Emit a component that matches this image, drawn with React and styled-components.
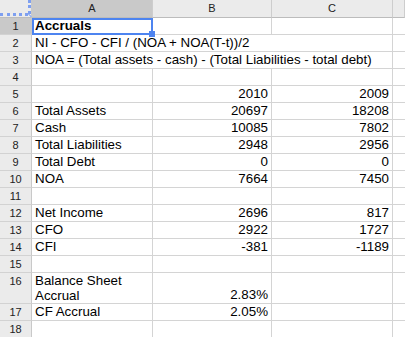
import React from "react";
import styled, { createGlobalStyle } from "styled-components";

const GlobalStyle = createGlobalStyle`
  html, body {
    margin: 0;
    padding: 0;
    background: #ffffff;
  }
  body {
    font-family: "Liberation Sans", Arial, sans-serif;
    color: #000000;
  }
`;

const rows = [
  { n: 1, cells: [{ text: "Accruals", bold: true, selected: true }, {}, {}] },
  { n: 2, cells: [{ text: "NI - CFO - CFI / (NOA + NOA(T-t))/2", span: 3 }] },
  {
    n: 3,
    cells: [
      {
        text: "NOA = (Total assets - cash) - (Total Liabilities - total debt)",
        span: 3,
      },
    ],
  },
  { n: 4, cells: [{}, {}, {}] },
  { n: 5, cells: [{}, { text: "2010", num: true }, { text: "2009", num: true }] },
  { n: 6, cells: [{ text: "Total Assets" }, { text: "20697", num: true }, { text: "18208", num: true }] },
  { n: 7, cells: [{ text: "Cash" }, { text: "10085", num: true }, { text: "7802", num: true }] },
  { n: 8, cells: [{ text: "Total Liabilities" }, { text: "2948", num: true }, { text: "2956", num: true }] },
  { n: 9, cells: [{ text: "Total Debt" }, { text: "0", num: true }, { text: "0", num: true }] },
  { n: 10, cells: [{ text: "NOA" }, { text: "7664", num: true }, { text: "7450", num: true }] },
  { n: 11, cells: [{}, {}, {}] },
  { n: 12, cells: [{ text: "Net Income" }, { text: "2696", num: true }, { text: "817", num: true }] },
  { n: 13, cells: [{ text: "CFO" }, { text: "2922", num: true }, { text: "1727", num: true }] },
  { n: 14, cells: [{ text: "CFI" }, { text: "-381", num: true }, { text: "-1189", num: true }] },
  { n: 15, cells: [{}, {}, {}] },
  { n: 16, cells: [{ text: "Balance Sheet Accrual", wrap: true }, { text: "2.83%", num: true }, {}] },
  { n: 17, cells: [{ text: "CF Accrual" }, { text: "2.05%", num: true }, {}] },
  { n: 18, cells: [{}, {}, {}] },
];

const columns = ["A", "B", "C"];

const Sheet = styled.div`
  display: grid;
  grid-template-columns: 32px 121px 119px 121px 1fr;
  grid-template-rows: 18px repeat(15, 17px) 31px 17px 17px;
  width: 100%;
  height: 337px;
  overflow: hidden;
`;

// frozen-pane handles: dotted blue bars along the corner's right and bottom
const Corner = styled.div`
  position: relative;
  z-index: 3;
  background: #ebebeb;
  border-right: 1px solid #c9c9c9;
  border-bottom: 1px solid #bcbcbc;

  &::before {
    content: "";
    position: absolute;
    top: 0;
    left: 28px;
    height: 14px;
    border-left: 3px dotted #7e9ff0;
  }

  &::after {
    content: "";
    position: absolute;
    top: 13px;
    left: 0;
    width: 28px;
    border-top: 3px dotted #7e9ff0;
  }
`;

const CornerJoin = styled.div`
  position: absolute;
  top: 14px;
  left: 28px;
  width: 4px;
  height: 3px;
  background: linear-gradient(45deg, transparent 35%, #9fb8f3 35%, #9fb8f3 65%, transparent 65%);
`;

const ColHeader = styled.div`
  background: ${(p) => (p.$active ? "#c9c9c9" : "#ebebeb")};
  border-right: 1px solid #cdcdcd;
  border-bottom: 1px solid #bcbcbc;
  font-size: 11px;
  line-height: 17px;
  color: #222222;
  text-align: center;
`;

const RowHeader = styled.div`
  background: ${(p) => (p.$active ? "#c9c9c9" : "#ebebeb")};
  border-right: 1px solid #c9c9c9;
  border-bottom: 1px solid #d2d2d2;
  font-size: 11px;
  line-height: 16px;
  color: #222222;
  text-align: center;
`;

const Cell = styled.div`
  position: relative;
  display: flex;
  align-items: flex-end;
  justify-content: ${(p) => (p.$num ? "flex-end" : "flex-start")};
  grid-column: ${(p) => (p.$span ? `span ${p.$span}` : "auto")};
  padding: 0 3px;
  border-right: 1px solid #d4d4d4;
  border-bottom: 1px solid #d4d4d4;
  font-size: 13.33px;
  font-weight: ${(p) => (p.$bold ? 700 : 400)};
  line-height: ${(p) => (p.$wrap ? "15px" : "16px")};
  white-space: ${(p) => (p.$wrap ? "normal" : "nowrap")};
  overflow: ${(p) => (p.$selected ? "visible" : "hidden")};
  background: #ffffff;
  z-index: ${(p) => (p.$selected ? 2 : 1)};
`;

const Selection = styled.div`
  position: absolute;
  top: 0;
  left: 0;
  right: -1px;
  bottom: -1px;
  border: 2px solid #4d84f0;
  pointer-events: none;
`;

const Handle = styled.div`
  position: absolute;
  right: -4px;
  bottom: -4px;
  width: 6px;
  height: 6px;
  background: #4d84f0;
`;

const Spare = styled.div`
  border-bottom: 1px solid #d4d4d4;
  background: #ffffff;
`;

export default function App() {
  return (
    <>
      <GlobalStyle />
      <Sheet>
        <Corner>
          <CornerJoin />
        </Corner>
        {columns.map((c) => (
          <ColHeader key={c} $active={c === "A"}>
            {c}
          </ColHeader>
        ))}
        <ColHeader />
        {rows.map((row) => (
          <React.Fragment key={row.n}>
            <RowHeader $active={row.n === 1}>{row.n}</RowHeader>
            {row.cells.map((cell, i) => (
              <Cell
                key={i}
                $num={cell.num}
                $bold={cell.bold}
                $span={cell.span}
                $wrap={cell.wrap}
                $selected={cell.selected}
              >
                {cell.text}
                {cell.selected && (
                  <Selection>
                    <Handle />
                  </Selection>
                )}
              </Cell>
            ))}
            <Spare />
          </React.Fragment>
        ))}
      </Sheet>
    </>
  );
}
